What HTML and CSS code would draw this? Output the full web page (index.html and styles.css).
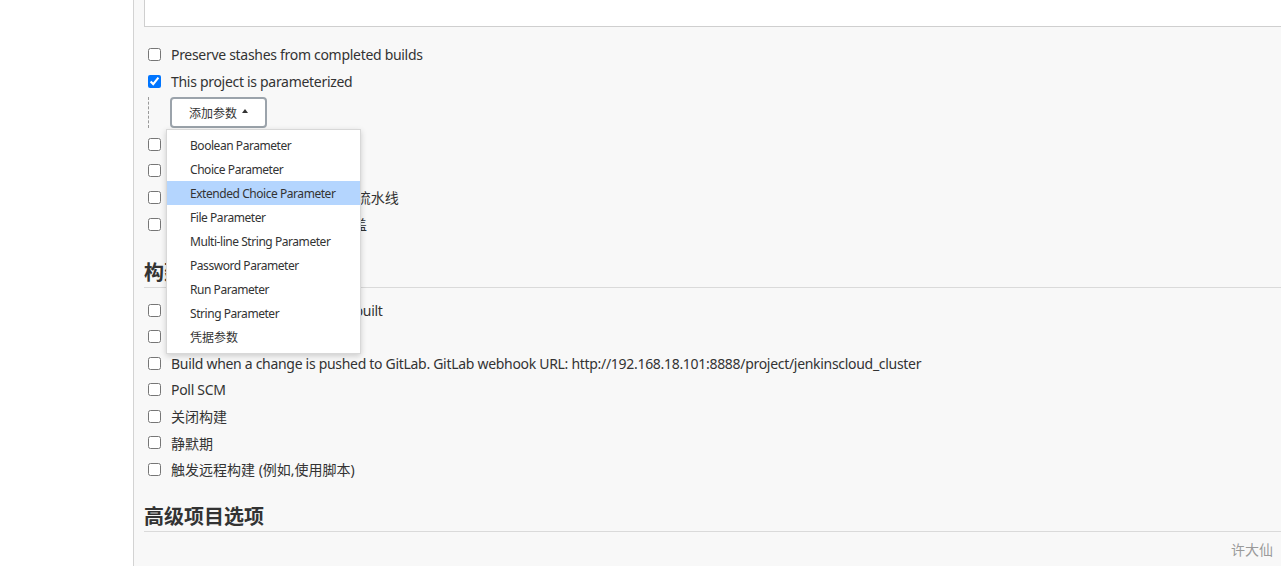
FILE: index.html
```html
<!DOCTYPE html>
<html lang="zh">
<head>
<meta charset="utf-8">
<title>Jenkins config</title>
<link rel="stylesheet" href="styles.css">
</head>
<body>
<div class="page">
  <aside class="sidebar"></aside>
  <main class="main">
    <div class="textarea"></div>

    <div class="rows first">
      <label class="row"><input type="checkbox"><span>Preserve stashes from completed builds</span></label>
      <label class="row"><input type="checkbox" checked><span>This project is parameterized</span></label>
    </div>

    <div class="param-block">
      <button class="add-btn" type="button"><span>添加参数</span><span class="caret"></span></button>
      <ul class="menu">
        <li>Boolean Parameter</li>
        <li>Choice Parameter</li>
        <li class="active">Extended Choice Parameter</li>
        <li>File Parameter</li>
        <li>Multi-line String Parameter</li>
        <li>Password Parameter</li>
        <li>Run Parameter</li>
        <li>String Parameter</li>
        <li class="zh">凭据参数</li>
      </ul>
    </div>

    <div class="rows mid">
      <label class="row"><input type="checkbox"><span>Throttle builds</span></label>
      <label class="row"><input type="checkbox"><span class="zh">不允许并发构建</span></label>
      <label class="row"><input type="checkbox"><span class="zh">如果控制器重启，不允许恢复 流水线</span></label>
      <label class="row"><input type="checkbox"><span class="zh">流水线效率、持久保存设置覆盖</span></label>
    </div>

    <h2 class="section">构建触发器</h2>
    <div class="rows triggers">
      <label class="row"><input type="checkbox"><span>Build after other projects are built</span></label>
      <label class="row"><input type="checkbox"><span>Build periodically</span></label>
      <label class="row"><input type="checkbox"><span>Build when a change is pushed to GitLab. GitLab webhook URL: http://192.168.18.101:8888/project/jenkinscloud_cluster</span></label>
      <label class="row"><input type="checkbox"><span>Poll SCM</span></label>
      <label class="row"><input type="checkbox"><span class="zh">关闭构建</span></label>
      <label class="row"><input type="checkbox"><span class="zh">静默期</span></label>
      <label class="row"><input type="checkbox"><span class="zh">触发远程构建 (例如,使用脚本)</span></label>
    </div>

    <h2 class="section last">高级项目选项</h2>
  </main>
  <div class="watermark">许大仙</div>
</div>
</body>
</html>
```

FILE: styles.css
```css
html, body {
  margin: 0;
  padding: 0;
  height: 100%;
  overflow: hidden;
}
body {
  font-family: "Noto Sans", "Noto Sans CJK SC", sans-serif;
  font-size: 14px;
  color: #333;
  background: #f8f8f8;
}
.page {
  display: flex;
  height: 566px;
  position: relative;
}
.sidebar {
  width: 133px;
  flex: none;
  background: #fff;
  border-right: 1px solid #d3d3d3;
}
.main {
  flex: 1;
  padding-left: 10px;
  min-width: 0;
  position: relative;
}
.textarea {
  height: 26px;
  background: #fff;
  border: 1px solid #cfcfcf;
  border-top: none;
  border-right: none;
  margin-right: -2px;
}
.rows {
  display: flex;
  flex-direction: column;
}
.rows.first {
  margin-top: 14px;
}
.row {
  display: flex;
  align-items: center;
  height: 26.6px;
  padding-left: 4px;
  white-space: nowrap;
  letter-spacing: -0.3px;
}
.rows.first .row {
  height: 27px;
}
.rows.triggers .row {
  height: 26.5px;
}
.row .zh {
  letter-spacing: 0;
}
.row input {
  margin: 0 10px 0 0;
  width: 13px;
  height: 13px;
  flex: none;
}
.param-block {
  position: relative;
  margin: 2px 0 3px 4px;
  padding-left: 21px;
  border-left: 1px dashed #9a9a9a;
  height: 31px;
}
.add-btn {
  height: 31px;
  width: 97px;
  font-family: "Noto Sans CJK SC", sans-serif;
  font-size: 12px;
  color: #333;
  background: #fff;
  border: 2px solid #9ba3ab;
  border-radius: 4px;
  display: flex;
  align-items: center;
  justify-content: center;
  gap: 5px;
  padding: 0 0 1px 0;
}
.caret {
  width: 0;
  height: 0;
  border-left: 3.5px solid transparent;
  border-right: 3.5px solid transparent;
  border-bottom: 4px solid #333;
  margin-bottom: 2px;
}
.menu {
  position: absolute;
  left: 17px;
  top: 32px;
  width: 193px;
  margin: 0;
  padding: 3px 0 4px;
  list-style: none;
  background: #fff;
  border: 1px solid #d8d8d8;
  box-shadow: 0 2px 6px rgba(0, 0, 0, 0.18);
  z-index: 5;
  font-size: 12px;
  letter-spacing: -0.45px;
}
.menu li {
  height: 24px;
  line-height: 25px;
  padding-left: 23px;
  white-space: nowrap;
}
.menu li.zh {
  letter-spacing: 0;
}
.menu li.active {
  background: #b4d5fe;
}
.section {
  margin: 21.6px 0 9px 0;
  height: 28px;
  line-height: 28px;
  font-size: 20px;
  font-weight: 700;
  color: #333;
  border-bottom: 1px solid #dadada;
  margin-right: -2px;
}
.section.last {
  margin-top: 20.5px;
}
.watermark {
  position: absolute;
  right: 8px;
  bottom: 7px;
  font-size: 14px;
  color: #9a9a9a;
}
```
